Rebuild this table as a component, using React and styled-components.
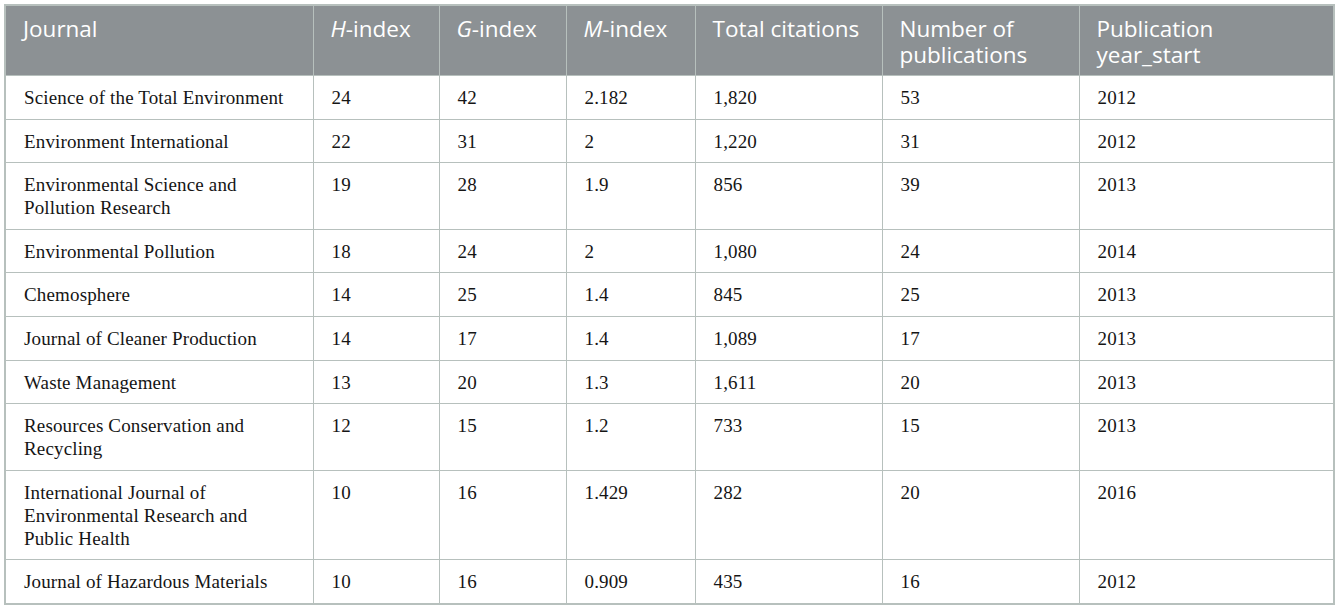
import React from "react";
import styled, { createGlobalStyle } from "styled-components";

const Global = createGlobalStyle`
  html, body { margin: 0; padding: 0; background: #ffffff; }
  body { padding: 4px; }
`;

const Table = styled.table`
  border-collapse: collapse;
  table-layout: fixed;
  width: 1329px;
  border: 2px solid #b7c0bd;
`;

const HeadCell = styled.th`
  background: #8c9194;
  color: #ffffff;
  font-family: "Open Sans", "Lato", sans-serif;
  font-weight: 400;
  font-size: 22.5px;
  line-height: 26px;
  text-align: left;
  vertical-align: top;
  padding: 10px 14px 7px 17px;
  border: 1px solid #b7c0bd;
`;

const Cell = styled.td`
  font-family: "Liberation Serif", "Times New Roman", serif;
  font-size: 19px;
  letter-spacing: 0.15px;
  line-height: 23px;
  color: #151515;
  text-align: left;
  vertical-align: top;
  padding: 10px 22px 9.6px 18px;
  border: 1px solid #b7c0bd;
`;

const cols = [308, 126, 127, 129, 187, 197, 255];

const rows = [
  ["Science of the Total Environment", "24", "42", "2.182", "1,820", "53", "2012"],
  ["Environment International", "22", "31", "2", "1,220", "31", "2012"],
  ["Environmental Science and Pollution Research", "19", "28", "1.9", "856", "39", "2013"],
  ["Environmental Pollution", "18", "24", "2", "1,080", "24", "2014"],
  ["Chemosphere", "14", "25", "1.4", "845", "25", "2013"],
  ["Journal of Cleaner Production", "14", "17", "1.4", "1,089", "17", "2013"],
  ["Waste Management", "13", "20", "1.3", "1,611", "20", "2013"],
  ["Resources Conservation and Recycling", "12", "15", "1.2", "733", "15", "2013"],
  ["International Journal of Environmental Research and Public Health", "10", "16", "1.429", "282", "20", "2016"],
  ["Journal of Hazardous Materials", "10", "16", "0.909", "435", "16", "2012"],
];

export default function App() {
  return (
    <>
      <Global />
      <Table>
        <colgroup>
          {cols.map((w, i) => (
            <col key={i} style={{ width: w }} />
          ))}
        </colgroup>
        <thead>
          <tr>
            <HeadCell>Journal</HeadCell>
            <HeadCell><i>H</i>-index</HeadCell>
            <HeadCell><i>G</i>-index</HeadCell>
            <HeadCell><i>M</i>-index</HeadCell>
            <HeadCell>Total citations</HeadCell>
            <HeadCell>Number of publications</HeadCell>
            <HeadCell>Publication year_start</HeadCell>
          </tr>
        </thead>
        <tbody>
          {rows.map((r, i) => (
            <tr key={i}>
              {r.map((c, j) => (
                <Cell key={j}>{c}</Cell>
              ))}
            </tr>
          ))}
        </tbody>
      </Table>
    </>
  );
}
